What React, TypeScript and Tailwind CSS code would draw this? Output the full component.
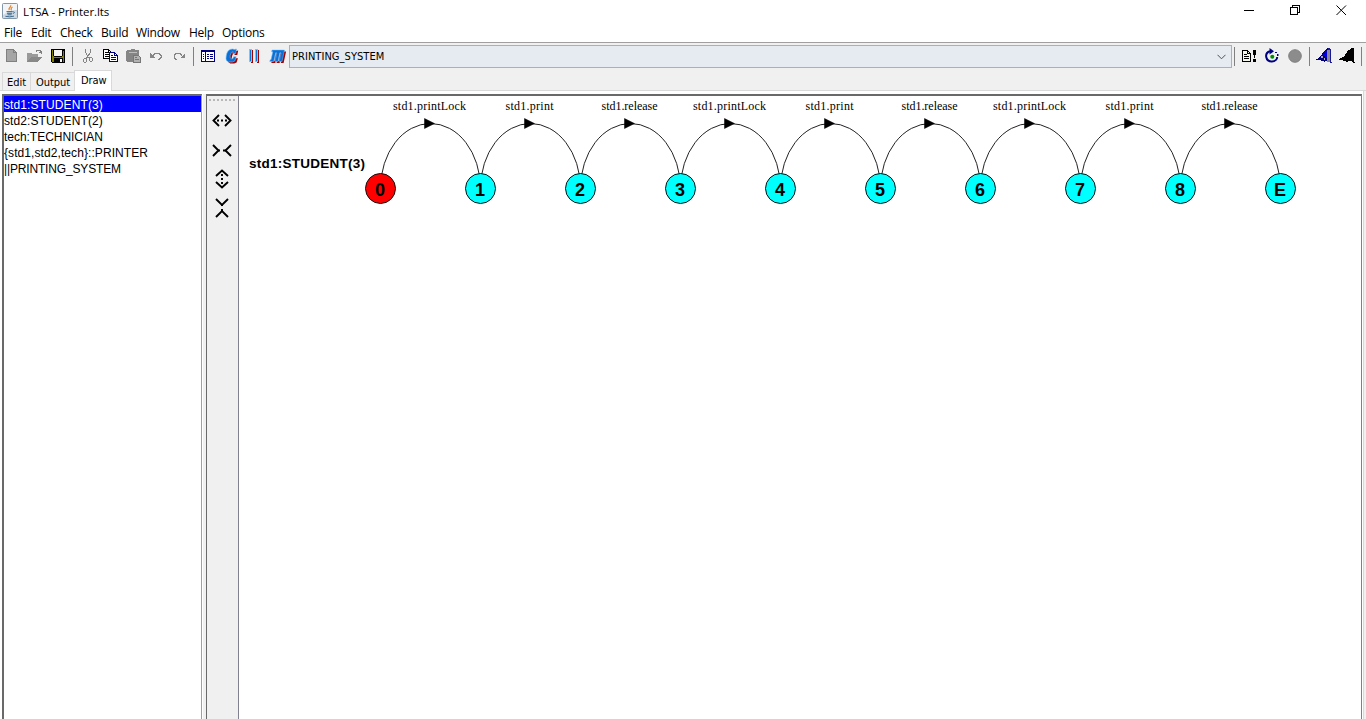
import React from "react";

type IconProps = { w: number; h: number; className?: string; smooth?: boolean; children: React.ReactNode };

function Icon({ w, h, className = "", smooth, children }: IconProps) {
  return (
    <svg
      width={w}
      height={h}
      viewBox={`0 0 ${w} ${h}`}
      className={`block shrink-0 ${className}`}
      shapeRendering={smooth ? "auto" : "crispEdges"}
      fill="none"
    >
      {children}
    </svg>
  );
}

function Separator({ className = "" }: { className?: string }) {
  return <div className={`mt-px h-[19px] w-px shrink-0 bg-[#808080] ${className}`} />;
}

function JavaIcon() {
  return (
    <Icon w={16} h={16} smooth>
      <rect x=".5" y=".5" width="15" height="15" rx="1" fill="#ccd9e3" stroke="#8297a8" />
      <path d="M1 1h14v6Q8 7 1 12Z" fill="#f1f5f8" />
      <path d="M8.5 2.2c1.6 1.6-3 2.5-1.2 5M10.6 4c-2.6 1.2-.8 2-1.6 3.4" stroke="#e8862e" strokeWidth="1.3" />
      <path d="M4.5 8.6h6.2M5 10.3h5.2M5.5 11.8h4.2M3.4 13.3q4.5 1.2 8.6-.2M11.2 8.7q2.4.2.2 2" stroke="#3f6a8c" />
    </Icon>
  );
}

function TitleBar() {
  return (
    <div className="flex h-6 shrink-0 items-start bg-white">
      <div className="ml-[2px] mt-[3px]"><JavaIcon /></div>
      <div className="ml-[5px] mt-[3px] w-[100px] whitespace-nowrap font-['Open_Sans',sans-serif] text-[11.5px] leading-[17px] tracking-[-0.1px]">
        LTSA - Printer.lts
      </div>
      <div className="ml-auto mr-[19px] mt-[5px] flex gap-[35px]">
        <Icon w={11} h={11}><path d="M0 5.5h10" stroke="#000" /></Icon>
        <Icon w={11} h={11}><path d="M.5 2.5h7v7h-7zM2.5 2.5v-2h7v7h-2" stroke="#000" /></Icon>
        <Icon w={11} h={11} smooth><path d="M.5.5l9.5 9.5M10 .5L.5 10" stroke="#000" /></Icon>
      </div>
    </div>
  );
}

function MenuBar() {
  return (
    <div className="flex h-[19px] shrink-0 border-b border-[#a0a0a0] bg-white pl-1 font-['Open_Sans',sans-serif] text-[12px] leading-[18px] tracking-[-0.25px]">
      <div className="w-[27px]">File</div>
      <div className="w-[29px]">Edit</div>
      <div className="w-[41px]">Check</div>
      <div className="w-[35px]">Build</div>
      <div className="w-[53px]">Window</div>
      <div className="w-[33px]">Help</div>
      <div className="w-[50px]">Options</div>
    </div>
  );
}

function NewIcon() {
  return (
    <Icon w={11} h={14}><path d="M.5.5h7l3 3v9H.5z" fill="#a5a5a5" stroke="#808080" /><path d="M7.5.5v3h3" stroke="#808080" /></Icon>
  );
}

function OpenIcon() {
  return (
    <Icon w={16} h={14}>
      <path d="M0 4h4l1 1h6v3H4L1 13H0z" fill="#999" />
      <path d="M0 13l4-5h11l-4 5z" fill="#888" />
      <path d="M9 2.5l1-1h3l1 1v2M12 3.5h3" stroke="#808080" />
    </Icon>
  );
}

function SaveIcon() {
  return (
    <Icon w={14} h={14}>
      <path d="M0 0h14v14H1l-1-1z" fill="#000" />
      <path d="M1 1h1v6h1v1h8V7h1V2h1v11H1z" fill="#808000" />
      <path d="M3 1h8v6H3zM10 10h1v3h-1z" fill="#f4f4f4" />
      <path d="M3 9h9v4H3z" fill="#000" />
      <path d="M9 10h2v3H9z" fill="#f4f4f4" />
    </Icon>
  );
}

function CutIcon() {
  return (
    <Icon w={10} h={14}>
      <path d="M2.5 0v3l1 2 1 2 2 3M7.5 0v3l-1 2-2 2-1 3" stroke="#858585" />
      <path d="M1.5 9.5h2v3l-1 1h-1l-1-1v-2zM6.5 8.5h2l1 1v2l-1 1h-1l-1-1z" stroke="#858585" />
    </Icon>
  );
}

function CopyIcon() {
  return (
    <Icon w={15} h={14}>
      <path d="M.5.5h5l3 3v6h-8z" fill="#fff" stroke="#000" />
      <path d="M5.5.5v3h3M2 3.5h3M2 5.5h5M2 7.5h5" stroke="#000" />
      <path d="M6.5 3.5h5l3 3v6h-8z" fill="#fff" stroke="#000080" />
      <path d="M11.5 3.5v3h3M8 6.5h2M8 8.5h5M8 10.5h5" stroke="#000080" />
    </Icon>
  );
}

function PasteIcon() {
  return (
    <Icon w={15} h={14}>
      <path d="M1 1h4V0h4v1h4v12H1L0 12V2z" fill="#858585" />
      <path d="M3 3.5h8" stroke="#bdbdbd" />
      <path d="M7.5 6.5h5l2 2v5h-7z" fill="#b2b2b2" stroke="#777" />
      <path d="M9 8.5h2M9 10.5h4" stroke="#777" />
    </Icon>
  );
}

function UndoIcon({ flip = false }: { flip?: boolean }) {
  return (
    <Icon w={12} h={8} className={flip ? "-scale-x-100" : ""}>
      <path d="M0 1v5h5L3 4 1 2z" fill="#858585" />
      <path d="M3 3.5l1-1 1-1h4l1 1 1 1v2l-1 1-1 1h-1" stroke="#858585" />
    </Icon>
  );
}

function PropertiesIcon() {
  return (
    <Icon w={14} h={12}>
      <path d="M.5.5h13v11H.5z" fill="#fff" stroke="#000080" />
      <path d="M0 1h14M4.5 2v10M2 4.5h1M2 6.5h1M2 8.5h1M6 4.5h2M9 4.5h3M6 6.5h2M9 6.5h3M6 8.5h2M9 8.5h3" stroke="#000080" />
    </Icon>
  );
}

function CompileIcon() {
  const c = "M11.5 1L10.6 5.5H7.8L8 3.6Q6 3.4 5.2 7.5Q4.6 10.6 6.3 10.8L8 10.6L8.6 8.7H11.2L9.9 12.9L7.5 14H3.5L1.5 12.5Q.7 11 1.2 8Q2.2 1 7.5 1L9.5 1.5Z";
  return (
    <Icon w={15} h={16} smooth>
      <path d={c} transform="translate(1.7 1.5)" fill="#a00000" />
      <path d={c} fill="#0a6fd6" stroke="#73c0fa" strokeWidth=".6" />
    </Icon>
  );
}

function ComposeIcon() {
  return (
    <Icon w={10} h={16}>
      <path d="M2 2h2v13H2zM8 2h2v13H8z" fill="#a00000" />
      <path d="M0 1h3v13H0zM6 1h3v13H6z" fill="#73c5ff" />
      <path d="M1 2h1v11H1zM7 2h1v11H7z" fill="#0878d8" />
    </Icon>
  );
}

function MinimiseIcon() {
  const m = "M3 1H15.5L13 12.5H10.2L12 4H10.9L9 12.5H6L7.8 4H6.7L4.7 12.5H.7L1.2 10.8H2L3.8 2.8H2.6Z";
  return (
    <Icon w={18} h={14} smooth>
      <path d={m} transform="translate(1.6 1.5)" fill="#a00000" />
      <path d={m} fill="#0a6fd6" stroke="#73c0fa" strokeWidth=".5" />
      <path d="M7 3.5L5.2 12M11.2 3.5L9.4 12" stroke="#8bcdfc" strokeWidth=".8" />
    </Icon>
  );
}

function CheckIcon() {
  return (
    <Icon w={14} h={12}>
      <path d="M.5.5h5l3 3v8h-8z" fill="#f5f5e8" stroke="#000" />
      <path d="M5.5.5v3h3M2 4.5h3M2 6.5h5M2 8.5h5" stroke="#000" />
      <path d="M11 0h3v5h-1v3h-1V5h-1zM11 9h3v3h-3z" fill="#000" />
    </Icon>
  );
}

function ReloadIcon() {
  return (
    <Icon w={14} h={16} smooth>
      <path d="M5 3.2C-1 5 .3 13.4 7 13.4c3 0 5.2-2 5.2-4.4" stroke="#000080" strokeWidth="2" />
      <path d="M4.5 0v6.5L9 3.2z" fill="#000080" />
      <path d="M10 4h2v1h-2zM12 6h1.5v2H12z" fill="#000080" />
      <circle cx="7.3" cy="8.7" r="2" fill="#008a00" />
    </Icon>
  );
}

function AnimateIcon({ dark = false }: { dark?: boolean }) {
  return (
    <Icon w={16} h={16}>
      {dark ? (
        <path d="M13 0h2v14h1v1h-2l-2-2H9v1H7v-1H4l-1-1H0v-1l2-1 2-1 2-2V6l2-1V3l2-1z" fill="#000" />
      ) : (
        <>
          <path d="M12 0v13H9v1H8v-1H5v-1H0v-1l3-1 1-2 2-1 1-3 2-2z" fill="#000080" />
          <path d="M9 3h2v7H9zM7 6h2v2H7z" fill="#0000e8" />
          <path d="M11 2h3v12h-3z" fill="#8c8c8c" />
          <path d="M12 0h2v1h1v13h1v1h-2V2h-2z" fill="#1818a0" />
          <path d="M5 8h2v2H5zM8 10h1v2H8z" fill="#aaa" />
        </>
      )}
    </Icon>
  );
}

function ToolBar() {
  return (
    <div className="flex h-[27px] shrink-0 items-center bg-[#f0f0f0] pb-px pl-[6px]">
      <NewIcon />
      <div className="ml-[10px]"><OpenIcon /></div>
      <div className="ml-[8px]"><SaveIcon /></div>
      <Separator className="ml-[7px]" />
      <div className="ml-[10px]"><CutIcon /></div>
      <div className="ml-[10px]"><CopyIcon /></div>
      <div className="ml-[8px]"><PasteIcon /></div>
      <div className="ml-[9px]"><UndoIcon /></div>
      <div className="ml-[11px]"><UndoIcon flip /></div>
      <Separator className="ml-[8px]" />
      <div className="ml-[7px]"><PropertiesIcon /></div>
      <div className="ml-[10px]"><CompileIcon /></div>
      <div className="ml-[9px]"><ComposeIcon /></div>
      <div className="ml-[10px]"><MinimiseIcon /></div>
      <div className="ml-[2px] mt-px flex h-[23px] w-[943px] shrink-0 items-center justify-between border border-[#a9b0b8] bg-[#e5ebf1] pl-[2px] pr-[5px]">
        <span className="whitespace-nowrap font-['DejaVu_Sans_Condensed','DejaVu_Sans',sans-serif] text-[11px] leading-[15px] tracking-[0.05px] [font-stretch:condensed]">PRINTING_SYSTEM</span>
        <Icon w={9} h={6} smooth><path d="M.5.8l4 4 4-4" stroke="#505050" /></Icon>
      </div>
      <Separator className="ml-[2px]" />
      <div className="ml-[7px]"><CheckIcon /></div>
      <div className="ml-[9px]"><ReloadIcon /></div>
      <div className="ml-[9px]">
        <Icon w={14} h={14} smooth><circle cx="7" cy="7" r="6.3" fill="#8c8c8c" stroke="#808080" /></Icon>
      </div>
      <Separator className="ml-[7px]" />
      <div className="ml-[6px]"><AnimateIcon /></div>
      <div className="ml-[7px]"><AnimateIcon dark /></div>
      <Separator className="ml-[6px]" />
    </div>
  );
}

function Tabs() {
  return (
    <div className="flex h-[21px] shrink-0 items-end bg-[#f0f0f0] font-['DejaVu_Sans_Condensed','DejaVu_Sans',sans-serif] text-[11px] tracking-[-0.05px] [font-stretch:condensed]">
      <div className="h-px w-[2px] bg-[#d9d9d9]" />
      <div className="h-[19px] w-[29px] border border-[#d9d9d9] pl-[4px] leading-[19px]">Edit</div>
      <div className="h-[19px] w-[43px] border-y border-[#d9d9d9] pl-[5px] leading-[19px]">Output</div>
      <div className="h-[21px] w-[38px] border-x border-t border-[#d9d9d9] bg-white pl-[6px] leading-[19px]">Draw</div>
      <div className="h-px grow bg-[#d9d9d9]" />
    </div>
  );
}

const machines = [
  { name: "std1:STUDENT(3)", spacing: "tracking-[0.1px]" },
  { name: "std2:STUDENT(2)", spacing: "tracking-[0.1px]" },
  { name: "tech:TECHNICIAN", spacing: "tracking-[-0.03px]" },
  { name: "{std1,std2,tech}::PRINTER", spacing: "tracking-[0.08px]" },
  { name: "||PRINTING_SYSTEM", spacing: "tracking-[-0.16px]" },
];

function MachineList() {
  return (
    <div className="w-[200px] shrink-0 border-l-2 border-r border-t-2 border-l-[#696969] border-r-[#a0a0a0] border-t-[#696969] bg-white font-['Liberation_Sans',sans-serif] text-[12px]">
      {machines.map((m, i) => (
        <div
          key={m.name}
          className={`h-4 whitespace-nowrap pt-px leading-[16px] ${m.spacing} ${i === 0 ? "bg-[#0000ff] text-white" : "text-black"}`}
        >
          {m.name}
        </div>
      ))}
    </div>
  );
}

function StretchTools() {
  return (
    <div className="flex w-[32px] shrink-0 flex-col items-center border-r border-[#808090] bg-[#f0f0f0]">
      <svg width="31" height="5" className="mt-[2px] shrink-0" shapeRendering="crispEdges">
        <path d="M2 2h28" stroke="#b8b8b8" strokeWidth="2" strokeDasharray="2 2" />
      </svg>
      <Icon w={20} h={13} className="mr-px mt-[11px]" smooth>
        <path d="M7 1L1.5 6.5 7 12M13 1l5.5 5.5L13 12" stroke="#000" strokeWidth="1.9" />
        <path d="M5 6.5h2M9 6.5h2M13 6.5h2" stroke="#000" strokeWidth="1.9" />
      </Icon>
      <Icon w={20} h={13} className="mr-px mt-[17px]" smooth>
        <path d="M1 1l5.5 5.5L1 12M19 1l-5.5 5.5L19 12" stroke="#000" strokeWidth="1.9" />
        <path d="M6 6.5h2M11 6.5h3" stroke="#000" strokeWidth="1.9" />
      </Icon>
      <Icon w={14} h={20} className="mr-px mt-[12px]" smooth>
        <path d="M1 7l6-5.5L13 7M1 13l6 5.5 6-5.5" stroke="#000" strokeWidth="1.9" />
        <path d="M7 5v2M7 9v2M7 13v2" stroke="#000" strokeWidth="1.9" />
      </Icon>
      <Icon w={14} h={20} className="mr-px mt-[9px]" smooth>
        <path d="M1 1l6 6 6-6M1 19l6-6 6 6" stroke="#000" strokeWidth="1.9" />
        <path d="M7 6v2M7 11v3" stroke="#000" strokeWidth="1.9" />
      </Icon>
    </div>
  );
}

const states = ["0", "1", "2", "3", "4", "5", "6", "7", "8", "E"];
const actions = [
  { text: "std1.printLock", width: 73 },
  { text: "std1.print", width: 48 },
  { text: "std1.release", width: 56 },
];

function Diagram() {
  return (
    <svg width="1122" height="623" className="block shrink-0 bg-white">
      <text x="10" y="71.5" textLength="116" className="font-['Liberation_Sans',sans-serif] text-[13.5px] font-bold">std1:STUDENT(3)</text>
      {states.slice(0, -1).map((s, i) => {
        const x = 141.5 + i * 100;
        const a = actions[i % 3];
        return (
          <g key={s}>
            <path d={`M${x} 92.5A50 65 0 0 1 ${x + 100} 92.5`} fill="none" stroke="#222" />
            <path d={`M${x + 44} 22.5v10l10-5z`} fill="#000" stroke="#000" strokeWidth=".5" />
            <text x={x + 49 - a.width / 2} y="14" textLength={a.width} className="font-['Liberation_Serif',serif] text-[12px]">{a.text}</text>
          </g>
        );
      })}
      {states.map((s, i) => (
        <g key={s}>
          <circle cx={141.5 + i * 100} cy="92.5" r="15" fill={i === 0 ? "#ff0000" : "#00ffff"} stroke="#111" />
          <text x={141 + i * 100} y="99.5" textAnchor="middle" className="font-['Liberation_Sans',sans-serif] text-[18px] font-bold">{s}</text>
        </g>
      ))}
    </svg>
  );
}

export default function App() {
  return (
    <div className="flex h-[719px] w-[1366px] flex-col overflow-hidden bg-[#f0f0f0] text-black">
      <TitleBar />
      <MenuBar />
      <ToolBar />
      <Tabs />
      <div className="mr-[2px] flex min-h-0 grow border-r border-[#d9d9d9] bg-white pl-[2px] pt-[3px]">
        <MachineList />
        <div className="w-[4px] shrink-0 border-l border-white bg-[#f0f0f0]" />
        <div className="flex w-[1156px] shrink-0 overflow-hidden border-l border-r border-t-2 border-l-[#696969] border-r-[#808080] border-t-[#696969]">
          <StretchTools />
          <Diagram />
        </div>
      </div>
    </div>
  );
}
